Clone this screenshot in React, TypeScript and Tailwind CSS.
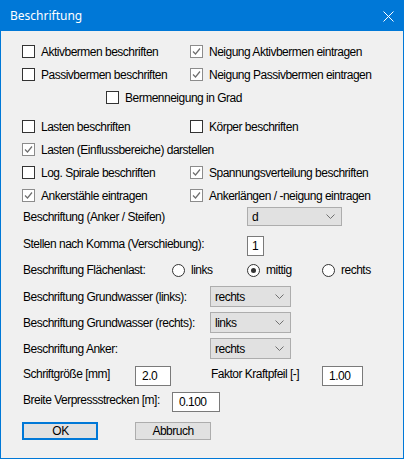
import React from 'react';

type CheckProps = {
  label: string;
  checked?: boolean;
};

function Check({ label, checked = false }: CheckProps) {
  return (
    <label className="flex items-center gap-[6px]">
      <span
        className={
          checked
            ? 'flex h-[13px] w-[13px] items-center justify-center border border-[#8c8c8c] bg-white'
            : 'flex h-[13px] w-[13px] border border-[#333333] bg-white'
        }
      >
        {checked && (
          <svg width="11" height="11" viewBox="0 0 11 11">
            <polyline points="2,5.5 4.5,8 9,2.5" fill="none" stroke="#6e6e6e" strokeWidth="1.2" />
          </svg>
        )}
      </span>
      <span>{label}</span>
    </label>
  );
}

function Radio({ label, checked = false }: CheckProps) {
  return (
    <label className="flex items-center gap-[6px]">
      <span className="flex h-[13px] w-[13px] items-center justify-center rounded-full border border-[#333333] bg-white">
        {checked && <span className="h-[5px] w-[5px] rounded-full bg-[#333333]" />}
      </span>
      <span>{label}</span>
    </label>
  );
}

function Select({ value, className }: { value: string; className: string }) {
  return (
    <div className={`flex items-center justify-between border border-[#adadad] bg-[#e1e1e1] pl-[4px] pr-[6px] ${className}`}>
      <span>{value}</span>
      <svg width="9" height="5" viewBox="0 0 9 5">
        <polyline points="0.5,0.5 4.5,4.5 8.5,0.5" fill="none" stroke="#707070" strokeWidth="1" />
      </svg>
    </div>
  );
}

function Field({ value, className }: { value: string; className: string }) {
  return (
    <div className={`flex h-[20px] items-center border border-[#7a7a7a] bg-white ${className}`}>
      {value}
    </div>
  );
}

export default function App() {
  return (
    <div className="flex h-[459px] w-[404px] flex-col border border-[#0078d7] bg-[#f0f0f0] font-['Liberation_Sans',Arial,sans-serif] text-[12px] leading-[14px] tracking-[-0.5px] text-black">
      <div className="flex h-[30px] shrink-0 items-center justify-between bg-[#0078d7] pl-[9px] pr-[9px]">
        <span className="font-['Noto_Sans',sans-serif] text-[12px] tracking-normal text-white">Beschriftung</span>
        <svg width="11" height="11" viewBox="0 0 11 11">
          <line x1="0.5" y1="0.5" x2="10.5" y2="10.5" stroke="white" strokeWidth="1" />
          <line x1="10.5" y1="0.5" x2="0.5" y2="10.5" stroke="white" strokeWidth="1" />
        </svg>
      </div>

      <div className="flex flex-col pl-[21px] pt-[9px]">
        <div className="flex h-[23px] items-center">
          <div className="w-[168px]"><Check label="Aktivbermen beschriften" /></div>
          <Check label="Neigung Aktivbermen eintragen" checked />
        </div>
        <div className="flex h-[23px] items-center">
          <div className="w-[168px]"><Check label="Passivbermen beschriften" /></div>
          <Check label="Neigung Passivbermen eintragen" checked />
        </div>
        <div className="flex h-[23px] items-center pl-[84px]">
          <Check label="Bermenneigung in Grad" />
        </div>

        <div className="mt-[6px] flex h-[23px] items-center">
          <div className="w-[168px]"><Check label="Lasten beschriften" /></div>
          <Check label="Körper beschriften" />
        </div>
        <div className="flex h-[23px] items-center">
          <Check label="Lasten (Einflussbereiche) darstellen" checked />
        </div>
        <div className="flex h-[23px] items-center">
          <div className="w-[168px]"><Check label="Log. Spirale beschriften" /></div>
          <Check label="Spannungsverteilung beschriften" checked />
        </div>
        <div className="flex h-[23px] items-center">
          <div className="w-[168px]"><Check label="Ankerstähle eintragen" checked /></div>
          <Check label="Ankerlängen / -neigung eintragen" checked />
        </div>

        <div className="flex h-[19px] items-center">
          <span className="w-[225px] pl-[1px]">Beschriftung (Anker / Steifen)</span>
          <Select value="d" className="h-[19px] w-[95px]" />
        </div>

        <div className="mt-[10px] flex h-[20px] items-start">
          <span className="w-[225px] pl-[1px] pt-[1px]">Stellen nach Komma (Verschiebung):</span>
          <Field value="1" className="w-[17px] pl-[4px]" />
        </div>

        <div className="mt-[4px] flex h-[20px] items-center">
          <span className="w-[150px] pl-[1px]">Beschriftung Flächenlast:</span>
          <div className="w-[75px]"><Radio label="links" /></div>
          <div className="w-[75px]"><Radio label="mittig" checked /></div>
          <Radio label="rechts" />
        </div>

        <div className="mt-[6px] flex h-[21px] items-center">
          <span className="w-[188px] pl-[1px]">Beschriftung Grundwasser (links):</span>
          <Select value="rechts" className="h-[21px] w-[81px]" />
        </div>
        <div className="mt-[5px] flex h-[21px] items-center">
          <span className="w-[188px] pl-[1px]">Beschriftung Grundwasser (rechts):</span>
          <Select value="links" className="h-[21px] w-[81px]" />
        </div>
        <div className="mt-[5px] flex h-[21px] items-center">
          <span className="w-[188px] pl-[1px]">Beschriftung Anker:</span>
          <Select value="rechts" className="h-[21px] w-[81px]" />
        </div>

        <div className="mt-[7px] flex h-[20px] items-start">
          <span className="w-[113px] pl-[1px] pt-[1px]">Schriftgröße [mm]</span>
          <Field value="2.0" className="w-[36px] pl-[6px]" />
          <span className="ml-[40px] w-[111px] pt-[1px]">Faktor Kraftpfeil [-]</span>
          <Field value="1.00" className="w-[41px] pl-[6px]" />
        </div>

        <div className="mt-[6px] flex h-[20px] items-start">
          <span className="w-[150px] pl-[1px] pt-[1px]">Breite Verpressstrecken [m]:</span>
          <Field value="0.100" className="w-[48px] pl-[6px]" />
        </div>

        <div className="mt-[10px] flex">
          <button className="flex h-[18px] w-[76px] items-center justify-center border-2 border-[#0078d7] bg-[#e1e1e1] pl-[1px]">
            OK
          </button>
          <button className="ml-[37px] flex h-[18px] w-[76px] items-center justify-center border border-[#adadad] bg-[#e1e1e1]">
            Abbruch
          </button>
        </div>
      </div>
    </div>
  );
}
